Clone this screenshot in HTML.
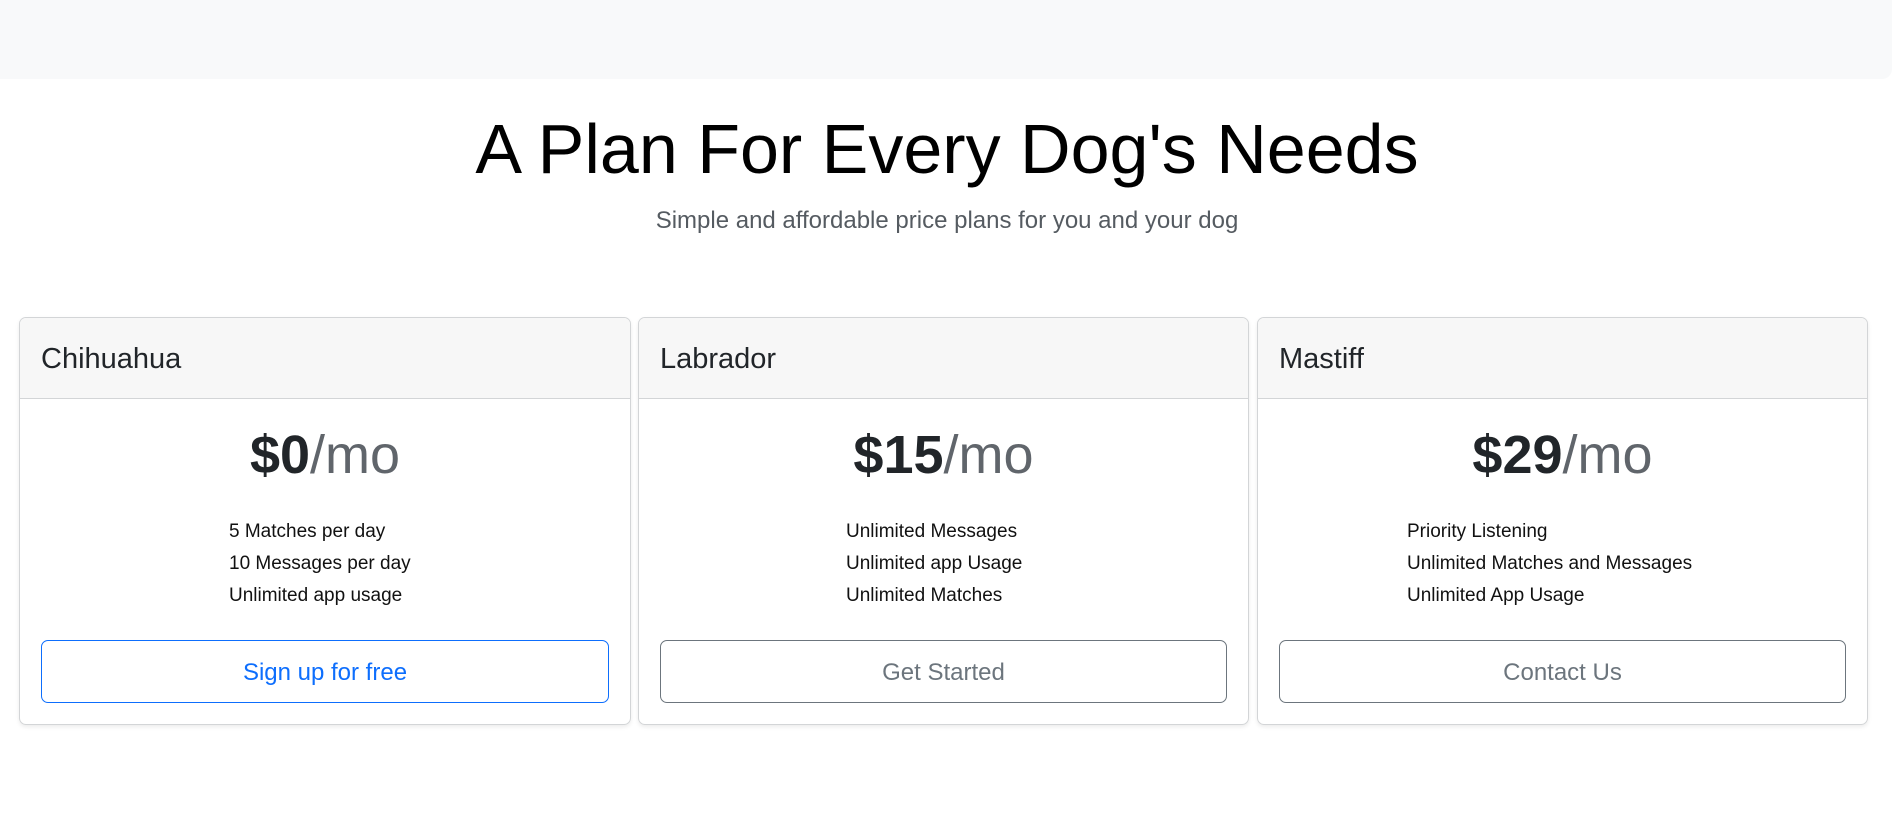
<!DOCTYPE html>
<html><head><style>
*{box-sizing:border-box;margin:0;padding:0}
body{width:1894px;height:818px;background:#fff;font-family:"Liberation Sans",sans-serif;color:#212529;position:relative;overflow:hidden}
.bar{position:absolute;left:0;top:0;width:1892px;height:79px;background:#f8f9fa;border-bottom-right-radius:10px}
h1{position:absolute;top:109px;left:0;width:1894px;text-align:center;font-weight:400;font-size:70px;color:#000}
.sub{position:absolute;top:207px;left:0;width:1894px;text-align:center;font-size:24px;color:#555b61}
.card{position:absolute;top:317px;height:408px;border:1px solid #d3d5d7;border-radius:7px;box-shadow:0 2px 4px rgba(0,0,0,.08);overflow:hidden}
.hd{height:81px;background:#f7f7f7;border-bottom:1px solid #d3d5d7;font-size:29px;padding:25px 0 0 21px}
.price{text-align:center;font-size:54px;font-weight:700;margin-top:25px;height:70px}
.price span{font-weight:400;color:#60656b}
ul{list-style:none;position:absolute;top:198px;font-size:19px;line-height:32px;color:#111}
.btn{position:absolute;left:21px;right:21px;top:322px;height:63px;border:1px solid #6c757d;border-radius:7px;text-align:center;line-height:63px;font-size:24px;color:#6c757d}
.btn.p{border-color:#0d6efd;color:#0d6efd}
</style></head><body>
<div class="bar"></div>
<h1>A Plan For Every Dog's Needs</h1>
<div class="sub">Simple and affordable price plans for you and your dog</div>
<div class="card" style="left:19px;width:612px">
<div class="hd">Chihuahua</div>
<div class="price">$0<span>/mo</span></div>
<ul style="left:209px"><li>5 Matches per day</li><li>10 Messages per day</li><li>Unlimited app usage</li></ul>
<div class="btn p">Sign up for free</div>
</div>
<div class="card" style="left:638px;width:611px">
<div class="hd">Labrador</div>
<div class="price">$15<span>/mo</span></div>
<ul style="left:207px"><li>Unlimited Messages</li><li>Unlimited app Usage</li><li>Unlimited Matches</li></ul>
<div class="btn">Get Started</div>
</div>
<div class="card" style="left:1257px;width:611px">
<div class="hd">Mastiff</div>
<div class="price">$29<span>/mo</span></div>
<ul style="left:149px"><li>Priority Listening</li><li>Unlimited Matches and Messages</li><li>Unlimited App Usage</li></ul>
<div class="btn">Contact Us</div>
</div>
</body></html>
